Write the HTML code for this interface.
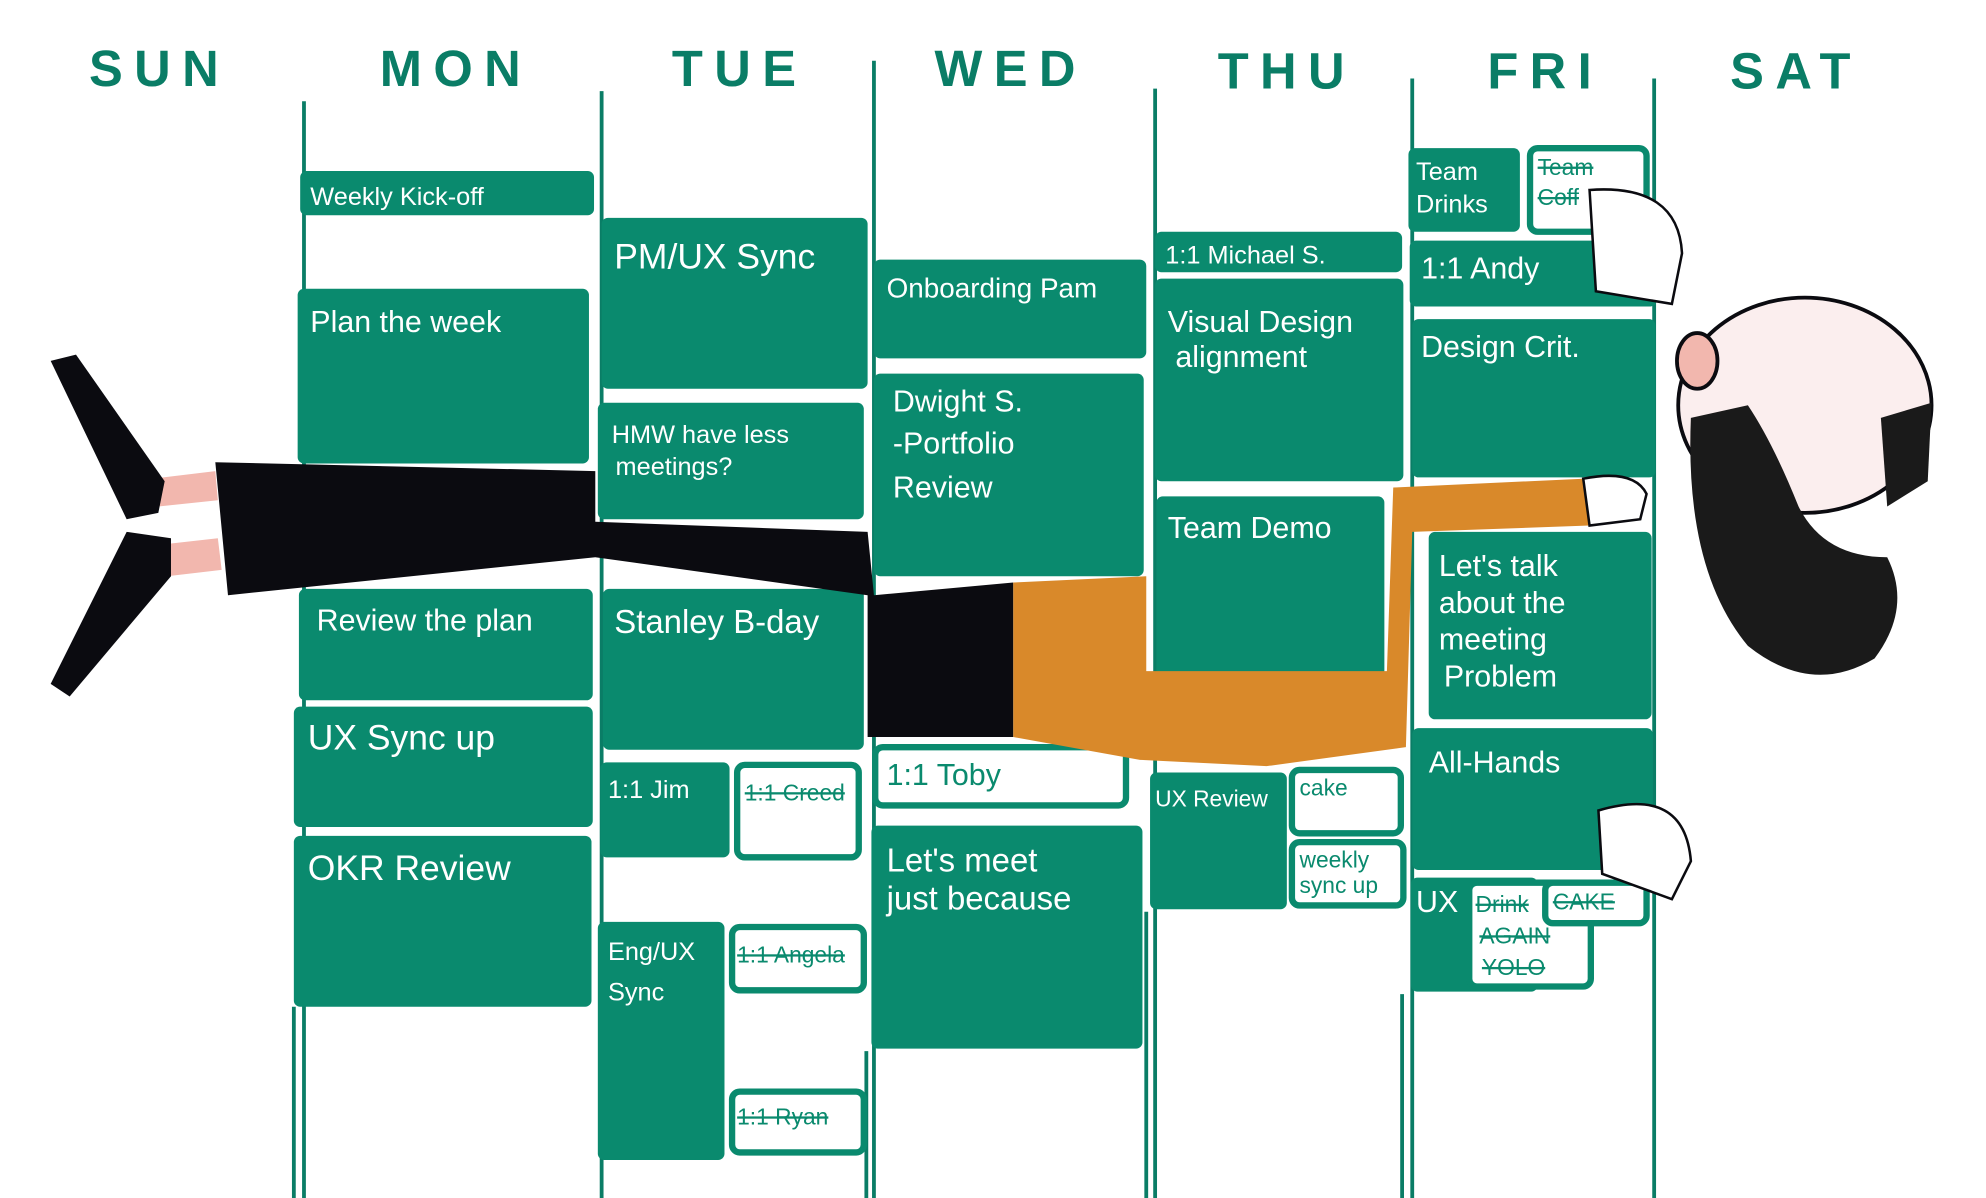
<!DOCTYPE html>
<html><head><meta charset="utf-8"><style>html,body{margin:0;padding:0;background:#fff;}svg{display:block}</style></head>
<body>
<svg width="1986" height="1198" viewBox="0 0 1568 946" preserveAspectRatio="none" xmlns="http://www.w3.org/2000/svg">
<g font-family="Liberation Sans, sans-serif" font-weight="bold" font-size="40" fill="#0a7d66" text-anchor="middle" letter-spacing="9">
<text x="126" y="68">SUN</text><text x="360" y="68">MON</text><text x="584" y="68">TUE</text><text x="798" y="68">WED</text><text x="1016" y="70">THU</text><text x="1220" y="70">FRI</text><text x="1418" y="70">SAT</text>
</g>
<g stroke="#0a7d66" stroke-width="3">
<line x1="240" y1="80" x2="240" y2="946"/><line x1="232" y1="795" x2="232" y2="946"/>
<line x1="475" y1="72" x2="475" y2="946"/><line x1="690" y1="48" x2="690" y2="946"/><line x1="684" y1="830" x2="684" y2="946"/>
<line x1="912" y1="70" x2="912" y2="946"/><line x1="905" y1="720" x2="905" y2="946"/>
<line x1="1115" y1="62" x2="1115" y2="946"/><line x1="1107" y1="785" x2="1107" y2="946"/>
<line x1="1306" y1="62" x2="1306" y2="946"/>
</g>
<g fill="#0a8a6e">
<rect x="237" y="135" width="232" height="35" rx="5"/>
<rect x="235" y="228" width="230" height="138" rx="5"/>
<rect x="236" y="465" width="232" height="88" rx="5"/>
<rect x="232" y="558" width="236" height="95" rx="5"/>
<rect x="232" y="660" width="235" height="135" rx="5"/>
<rect x="475" y="172" width="210" height="135" rx="5"/>
<rect x="472" y="318" width="210" height="92" rx="5"/>
<rect x="476" y="465" width="206" height="127" rx="5"/>
<rect x="474" y="602" width="102" height="75" rx="5"/>
<rect x="472" y="728" width="100" height="188" rx="5"/>
<rect x="690" y="205" width="215" height="78" rx="5"/>
<rect x="690" y="295" width="213" height="160" rx="5"/>
<rect x="688" y="652" width="214" height="176" rx="5"/>
<rect x="912" y="183" width="195" height="32" rx="5"/>
<rect x="912" y="220" width="196" height="160" rx="5"/>
<rect x="913" y="392" width="180" height="143" rx="5"/>
<rect x="908" y="610" width="108" height="108" rx="5"/>
<rect x="1112" y="117" width="88" height="66" rx="5"/>
<rect x="1113" y="190" width="195" height="52" rx="5"/>
<rect x="1115" y="252" width="192" height="125" rx="5"/>
<rect x="1128" y="420" width="176" height="148" rx="5"/>
<rect x="1115" y="575" width="190" height="112" rx="5"/>
<rect x="1114" y="693" width="100" height="90" rx="5"/>
</g>
<g fill="#fff" stroke="#0a8a6e" stroke-width="5">
<rect x="582" y="604" width="96" height="73" rx="6"/>
<rect x="578" y="732" width="104" height="50" rx="6"/>
<rect x="578" y="862" width="104" height="48" rx="6"/>
<rect x="691" y="590" width="198" height="46" rx="6"/>
<rect x="1020" y="608" width="86" height="50" rx="6"/>
<rect x="1020" y="665" width="88" height="50" rx="6"/>
<rect x="1208" y="117" width="92" height="66" rx="6"/>
<rect x="1160" y="697" width="96" height="82" rx="6"/>
<rect x="1220" y="697" width="80" height="32" rx="6"/>
</g>
<!-- person -->
<path d="M170 365 L470 372 L470 412 L685 420 L690 470 L800 460 L800 582 L685 582 L685 470 L470 440 L180 470 Z" fill="#0b0b10"/>
<path d="M800 460 L905 455 L905 530 L1095 530 L1100 385 L1250 378 L1255 415 L1115 420 L1110 590 L1000 605 L900 600 L800 582 Z" fill="#d9892a"/>
<path d="M120 378 L170 372 L172 395 L125 400 Z M128 430 L172 425 L175 450 L132 455 Z" fill="#f2b7ae"/>
<path d="M40 285 L60 280 L130 380 L125 405 L100 410 Z" fill="#0b0b10"/>
<path d="M100 420 L135 425 L135 455 L55 550 L40 540 Z" fill="#0b0b10"/>
<ellipse cx="1425" cy="320" rx="100" ry="85" fill="#fbeeee" stroke="#0b0b10" stroke-width="3"/>
<path d="M1335 330 Q1330 450 1380 510 Q1430 550 1480 520 Q1510 480 1490 440 Q1440 440 1420 400 Q1400 350 1380 320 Z" fill="#1a1a1a"/>
<path d="M1485 330 L1525 318 L1522 380 L1490 400 Z" fill="#1a1a1a"/>
<ellipse cx="1340" cy="285" rx="16" ry="22" fill="#f2b7ae" stroke="#0b0b10" stroke-width="3"/>
<path d="M1255 150 Q1325 145 1328 200 L1320 240 L1260 230 Z M1262 640 Q1330 620 1335 680 L1320 710 L1265 690 Z M1250 378 Q1290 370 1300 390 L1295 410 L1255 415 Z" fill="#fff" stroke="#0b0b10" stroke-width="2"/>
<g font-family="Liberation Sans, sans-serif" font-size="24" fill="#fff">
<text x="245" y="162" font-size="20">Weekly Kick-off</text>
<text x="245" y="262">Plan the week</text>
<text x="250" y="498">Review the plan</text>
<text x="243" y="592" font-size="28">UX Sync up</text>
<text x="243" y="695" font-size="28">OKR Review</text>
<text x="485" y="212" font-size="28">PM/UX Sync</text>
<text x="483" y="350" font-size="20">HMW have less</text><text x="486" y="375" font-size="20">meetings?</text>
<text x="485" y="500" font-size="26">Stanley B-day</text>
<text x="480" y="630" font-size="20">1:1 Jim</text>
<text x="480" y="758" font-size="20">Eng/UX</text><text x="480" y="790" font-size="20">Sync</text>
<text x="700" y="235" font-size="22">Onboarding Pam</text>
<text x="705" y="325">Dwight S.</text><text x="705" y="358">-Portfolio</text><text x="705" y="393">Review</text>
<text x="700" y="688" font-size="26">Let's meet</text><text x="700" y="718" font-size="26">just because</text>
<text x="920" y="208" font-size="20">1:1 Michael S.</text>
<text x="922" y="262">Visual Design</text><text x="928" y="290">alignment</text>
<text x="922" y="425">Team Demo</text>
<text x="912" y="637" font-size="18">UX Review</text>
<text x="1118" y="142" font-size="20">Team</text><text x="1118" y="168" font-size="20">Drinks</text>
<text x="1122" y="220">1:1 Andy</text>
<text x="1122" y="282">Design Crit.</text>
<text x="1136" y="455">Let's talk</text><text x="1136" y="484">about the</text><text x="1136" y="513">meeting</text><text x="1140" y="542">Problem</text>
<text x="1128" y="610">All-Hands</text>
<text x="1118" y="720">UX</text>
</g>
<g font-family="Liberation Sans, sans-serif" font-size="18" fill="#0a8a6e">
<text x="588" y="632" text-decoration="line-through">1:1 Creed</text>
<text x="582" y="760" text-decoration="line-through">1:1 Angela</text>
<text x="582" y="888" text-decoration="line-through">1:1 Ryan</text>
<text x="700" y="620" font-size="24">1:1 Toby</text>
<text x="1026" y="628">cake</text>
<text x="1026" y="685">weekly</text><text x="1026" y="705">sync up</text>
<text x="1214" y="138" text-decoration="line-through">Team</text><text x="1214" y="162" text-decoration="line-through">Coff</text>
<text x="1165" y="720" text-decoration="line-through">Drink</text><text x="1168" y="745" text-decoration="line-through">AGAIN</text><text x="1170" y="770" text-decoration="line-through">YOLO</text>
<text x="1226" y="718" text-decoration="line-through">CAKE</text>
</g>
</svg>
</body></html>
